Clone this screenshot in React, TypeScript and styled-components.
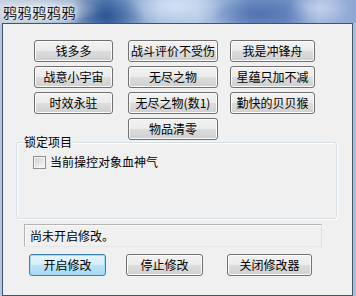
import React from "react";
import styled, { createGlobalStyle } from "styled-components";

const GlobalStyle = createGlobalStyle`
  html, body {
    margin: 0;
    padding: 0;
    background: #9fb4d2;
  }
  body {
    font-family: "Noto Sans CJK SC", "Noto Sans", sans-serif;
    font-size: 12px;
    color: #000;
  }
`;

const Window = styled.div`
  width: 356px;
  height: 296px;
  display: flex;
  flex-direction: column;
  overflow: hidden;
  background: linear-gradient(
    90deg,
    #b7c7db 0%,
    #a9bedb 30%,
    #b9cce6 50%,
    #9fb5d9 75%,
    #a9bde0 100%
  );
`;

const TitleBar = styled.div`
  height: 23px;
  flex-shrink: 0;
  display: flex;
  align-items: center;
  padding-left: 3px;
  background:
    radial-gradient(ellipse 60px 14px at 40px 10px, rgba(230, 236, 244, 0.9), rgba(230, 236, 244, 0) 100%),
    radial-gradient(ellipse 40px 22px at 105px 16px, rgba(34, 74, 140, 0.8), rgba(34, 74, 140, 0) 100%),
    radial-gradient(ellipse 50px 20px at 175px 6px, rgba(214, 228, 246, 0.9), rgba(214, 228, 246, 0) 100%),
    radial-gradient(ellipse 50px 18px at 260px 14px, rgba(70, 104, 170, 0.75), rgba(70, 104, 170, 0) 100%),
    radial-gradient(ellipse 30px 16px at 320px 8px, rgba(200, 214, 238, 0.8), rgba(200, 214, 238, 0) 100%),
    linear-gradient(90deg, #c4cfdc 0%, #9db2cf 20%, #5a7fb5 30%, #a9c0e0 45%, #b4c9e6 55%, #7392c6 70%, #6f8ec4 80%, #a2b8dc 90%, #8ca6d2 100%);
`;

const Title = styled.span`
  font-size: 14px;
  line-height: 16px;
  letter-spacing: 0.6px;
  color: #1a1a1a;
  text-shadow: 0 0 4px #f4f7fb, 0 0 8px #eef2f8;
`;

const Client = styled.div`
  margin-left: 2px;
  width: 349px;
  height: 268px;
  border: 1px solid #435468;
  background: #f0f0f0;
  display: flex;
  flex-direction: column;
  padding-top: 16px;
  box-sizing: content-box;
`;

const ButtonArea = styled.div`
  display: flex;
  padding-left: 31px;
`;

const Column = styled.div<{ $width: number; $offset: number }>`
  display: flex;
  flex-direction: column;
  gap: 4px;
  width: ${(p) => p.$width}px;
  margin-left: ${(p) => p.$offset}px;
`;

const Button = styled.button<{ $width?: number; $default?: boolean; $offset?: number }>`
  width: ${(p) => (p.$width ? `${p.$width}px` : "100%")};
  height: 22px;
  padding: 0;
  margin: 0 0 0 ${(p) => p.$offset ?? 0}px;
  font-family: "Noto Sans CJK SC", "Noto Sans", sans-serif;
  font-size: 12px;
  line-height: 20px;
  color: #000;
  border-radius: 3px;
  border: 1px solid ${(p) => (p.$default ? "#3c7fb1" : "#707070")};
  background: ${(p) =>
    p.$default
      ? "linear-gradient(#e5f4fc 0%, #d6eefb 50%, #bde4f8 50%, #a8d6f1 100%)"
      : "linear-gradient(#f2f2f2 0%, #ebebeb 50%, #dddddd 50%, #cfcfcf 100%)"};
  box-shadow: inset 0 0 0 1px ${(p) => (p.$default ? "#9fdaf6" : "#fbfbfb")};
  white-space: nowrap;
`;

const GroupBox = styled.div`
  position: relative;
  margin-top: 2px;
  margin-left: 13px;
  width: 303px;
  height: 63px;
  border: 1px solid #d5dfe5;
  border-radius: 3px;
  box-shadow: inset 1px 1px 0 #ffffff, 1px 1px 0 #ffffff;
  padding: 12px 0 0 16px;
  box-sizing: content-box;
`;

const GroupLabel = styled.span`
  position: absolute;
  left: 6px;
  top: -8px;
  padding: 0 1px;
  line-height: 14px;
  background: #f0f0f0;
`;

const CheckRow = styled.label`
  display: flex;
  align-items: center;
  gap: 4px;
  width: 170px;
  line-height: 14px;
`;

const CheckBox = styled.span`
  width: 11px;
  height: 11px;
  border: 1px solid #8e8f8f;
  background: linear-gradient(135deg, #c9ced4 0%, #eceef0 70%, #f7f7f7 100%);
  box-shadow: inset 0 0 0 1px #f4f4f4;
  flex-shrink: 0;
`;

const StatusBox = styled.div`
  margin-top: 5px;
  margin-left: 21px;
  width: 291px;
  height: 21px;
  border: 1px solid;
  border-color: #b4b4b4 #e0e0e0 #e6e6e6 #b4b4b4;
  box-shadow: inset 1px 1px 0 #fbfbfb;
  display: flex;
  align-items: center;
  padding-left: 5px;
  box-sizing: content-box;
`;

const BottomBar = styled.div`
  display: flex;
  margin-top: 7px;
  padding-left: 26px;
  gap: 20px;
`;

const columns = [
  { width: 79, offset: 0, items: ["钱多多", "战意小宇宙", "时效永驻"] },
  {
    width: 90,
    offset: 15,
    items: ["战斗评价不受伤", "无尽之物", "无尽之物(数1)", "物品清零"],
  },
  { width: 85, offset: 12, items: ["我是冲锋舟", "星蕴只加不减", "勤快的贝贝猴"] },
];

function App() {
  return (
    <>
      <GlobalStyle />
      <Window>
        <TitleBar>
          <Title>鸦鸦鸦鸦鸦</Title>
        </TitleBar>
        <Client>
          <ButtonArea>
            {columns.map((col, i) => (
              <Column key={i} $width={col.width} $offset={col.offset}>
                {col.items.map((label) => (
                  <Button key={label}>{label}</Button>
                ))}
              </Column>
            ))}
          </ButtonArea>
          <GroupBox>
            <GroupLabel>锁定项目</GroupLabel>
            <CheckRow>
              <CheckBox />
              当前操控对象血神气
            </CheckRow>
          </GroupBox>
          <StatusBox>尚未开启修改。</StatusBox>
          <BottomBar>
            <Button $width={77} $default>
              开启修改
            </Button>
            <Button $width={77}>停止修改</Button>
            <Button $width={85} $offset={4}>
              关闭修改器
            </Button>
          </BottomBar>
        </Client>
      </Window>
    </>
  );
}

export default App;
